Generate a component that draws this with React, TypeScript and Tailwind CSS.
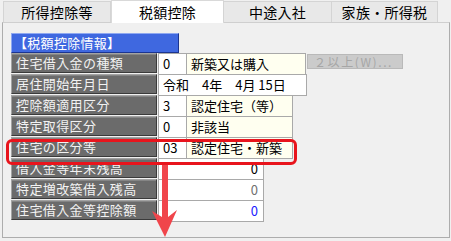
const tabs = [
  { label: '所得控除等', w: 'w-[108px]' },
  { label: '税額控除', w: 'w-[113px]', active: true },
  { label: '中途入社', w: 'w-[109px]' },
  { label: '家族・所得税', w: 'w-[107px]' },
];

function Label({ children }: { children: React.ReactNode }) {
  return (
    <div className="w-[146px] h-[20px] shrink-0 bg-[#6b6b6b] border border-t-[#a3a3a3] border-l-[#a3a3a3] border-b-[#3a3a3a] border-r-[#3a3a3a] shadow-[inset_0_1px_0_#858585] pl-[4px] text-[13px] leading-[18px] tracking-[0.4px] text-[#f2f2f2] whitespace-nowrap overflow-hidden">
      {children}
    </div>
  );
}

function Cell({
  w,
  children,
  ivory,
  className = '',
}: {
  w: string;
  children?: React.ReactNode;
  ivory?: boolean;
  className?: string;
}) {
  return (
    <div
      className={`${w} h-[22px] shrink-0 border border-[#a9a9a9] text-[13px] leading-[20px] text-black whitespace-nowrap ${
        ivory ? 'bg-[#fffff0]' : 'bg-white'
      } ${className}`}
    >
      {children}
    </div>
  );
}

function Row({ label, children }: { label: string; children: React.ReactNode }) {
  return (
    <div className="flex h-[21px] items-start">
      <Label>{label}</Label>
      <div className="flex items-start ml-px">{children}</div>
    </div>
  );
}

export default function App() {
  return (
    <div className="relative w-[451px] h-[241px] overflow-hidden bg-[#f0f0f0] font-['Noto_Sans_CJK_JP','Noto_Sans_CJK_SC',sans-serif]">
      {/* タブ */}
      <div className="flex h-[22px] pl-[3px] items-start relative z-10">
        {tabs.map((t) =>
          t.active ? (
            <div
              key={t.label}
              className={`${t.w} h-[23px] bg-white border border-b-0 border-[#d9d9d9] flex items-center justify-center text-[14px] tracking-[0.3px] text-black`}
            >
              {t.label}
            </div>
          ) : (
            <div
              key={t.label}
              className={`${t.w} mt-px h-[21px] bg-[#e8e8e8] border border-b-0 border-[#d4d4d4] -ml-px first:ml-0 flex items-center justify-center text-[14px] tracking-[0.3px] text-black`}
            >
              {t.label}
            </div>
          )
        )}
      </div>

      {/* パネル */}
      <div className="ml-[2px] w-[448px] h-[216px] border border-[#adadad] border-t-[#cfcfcf] pl-[8px] pt-[10px]">
        <div className="w-[168px] h-[20px] bg-[#3f68e0] border border-t-[#8fa8f0] border-l-[#8fa8f0] border-b-[#1c3590] border-r-[#1c3590] pl-[2px] text-[13px] leading-[18px] tracking-[0.3px] text-white">
          【税額控除情報】
        </div>

        <Row label="住宅借入金の種類">
          <Cell w="w-[29px]" className="pl-[4px]">0</Cell>
          <Cell w="w-[120px]" ivory className="-ml-px pl-[4px]">新築又は購入</Cell>
          <div className="ml-px mt-px w-[96px] h-[15px] bg-[#cbcbcb] border border-[#b9b9b9] text-[12px] leading-[13px] text-[#a6a6a6] pl-[6px] tracking-[1.6px] whitespace-nowrap overflow-hidden">
            ２以上(W)...
          </div>
        </Row>
        <Row label="居住開始年月日">
          <Cell w="w-[149px]" className="pl-[4px] whitespace-pre">令和　4年　4月 15日</Cell>
        </Row>
        <Row label="控除額適用区分">
          <Cell w="w-[29px]" className="pl-[4px]">3</Cell>
          <Cell w="w-[107px]" ivory className="-ml-px pl-[4px]">認定住宅（等）</Cell>
        </Row>
        <Row label="特定取得区分">
          <Cell w="w-[29px]" className="pl-[4px]">0</Cell>
          <Cell w="w-[107px]" ivory className="-ml-px pl-[4px]">非該当</Cell>
        </Row>
        <Row label="住宅の区分等">
          <Cell w="w-[29px]" className="pl-[4px]">03</Cell>
          <Cell w="w-[107px]" ivory className="-ml-px pl-[4px]">認定住宅・新築</Cell>
        </Row>
        <Row label="借入金等年末残高">
          <Cell w="w-[106px]" className="text-right pr-[5px]">0</Cell>
        </Row>
        <Row label="特定増改築借入残高">
          <Cell w="w-[106px]" className="text-right pr-[5px] !text-[#707070]">0</Cell>
        </Row>
        <Row label="住宅借入金等控除額">
          <Cell w="w-[106px]" className="text-right pr-[5px] !text-[#1a1aff]">0</Cell>
        </Row>
      </div>

      {/* 強調枠と矢印 */}
      <div className="absolute left-[6px] top-[139px] w-[291px] h-[26px] border-[3px] border-[#e8141c] rounded-[6px] z-20" />
      <svg className="absolute left-0 top-0 z-20" width="451" height="241" viewBox="0 0 451 241">
        <path d="M162 165 L168 165 L168 217 L177 210 L165 237 L152 211 L162 217 Z" fill="#f0454b" />
      </svg>
    </div>
  );
}
